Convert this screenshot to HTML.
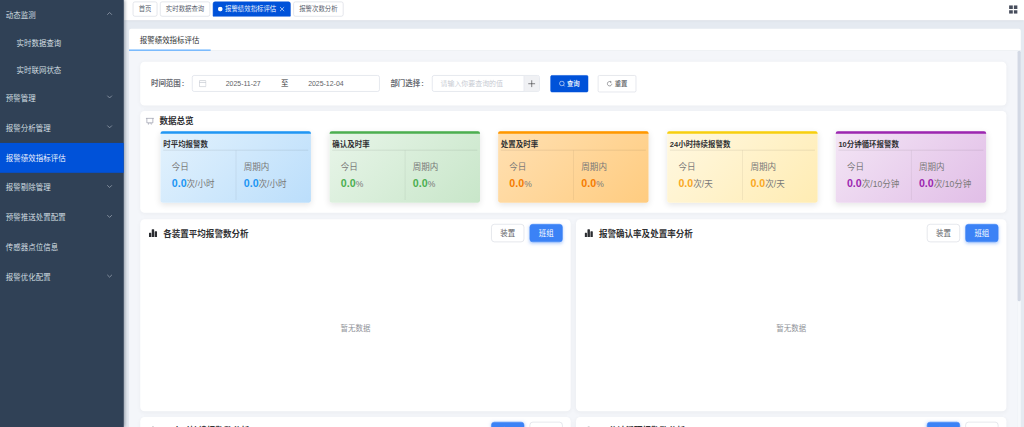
<!DOCTYPE html>
<html lang="zh-CN">
<head>
<meta charset="utf-8">
<title>报警绩效指标评估</title>
<style>
*{box-sizing:border-box;margin:0;padding:0}
html,body{width:1024px;height:427px;overflow:hidden;background:#e5eaf1}
body{font-family:"Liberation Sans","Noto Sans CJK SC",sans-serif;color:#303133}
#stage{position:absolute;left:0;top:0;width:1920px;height:801px;transform:scale(.533333);transform-origin:0 0;overflow:hidden;background:#e5eaf1;font-size:14px}
.abs{position:absolute}
/* sidebar */
#side{position:absolute;left:0;top:0;width:232px;height:801px;background:#304156;z-index:5;box-shadow:2px 0 6px rgba(0,21,41,.35)}
.mi{position:absolute;left:0;width:232px;height:56px;line-height:56px;padding-left:11px;font-size:14px;color:#dde3ea;white-space:nowrap;font-weight:350}
.mi.sub{height:50px;line-height:52px;padding-left:31px}
.mi.on{background:#0052d9;color:#fff}
.mi svg{position:absolute;right:20px;top:19px;width:13px;height:13px}
/* tags */
#tags{position:absolute;left:232px;top:0;width:1688px;height:38px;background:#fff;box-shadow:0 1px 3px 0 rgba(0,21,41,.07),0 2px 8px 0 rgba(0,21,41,.04);z-index:3}
.tag{position:absolute;top:3px;height:28px;line-height:26px;border:1px solid #cdd2dc;border-radius:4px;background:#fff;color:#495060;font-size:12px;padding:0 10px;white-space:nowrap;font-weight:350}
.tag.on{background:#0052d9;border-color:#0052d9;color:#fff;border-radius:4px 4px 1px 1px}
.tag.on .dot{display:inline-block;width:8px;height:8px;border-radius:50%;background:#fff;margin-right:5px;position:relative;top:0}
.tag.on .x{display:inline-block;width:16px;text-align:center;margin-left:1px;font-size:15px;line-height:20px;vertical-align:top;margin-top:2px;font-weight:400}
/* main */
#wrap{position:absolute;left:242px;top:54px;width:1672px;height:760px}
#thead{position:absolute;left:0;top:0;width:1672px;height:41px;background:#fff;border-radius:4px 4px 0 0;border-bottom:1px solid #dfe3ea}
#thead .t{position:absolute;left:0;top:0;height:40px;line-height:42px;padding:0 20px;font-size:14px;color:#303133;font-weight:400}
#thead .bar{position:absolute;left:0;top:39px;width:153px;height:2.5px;background:#409eff}
#tbody{position:absolute;left:0;top:41px;width:1666px;height:720px;background:#f4f6fa}
#sb{position:absolute;left:1666px;top:41px;width:6px;height:720px;background:#f6f8fb}
#sb i{position:absolute;left:0;top:0;width:6px;height:470px;background:#d2d8e4;border-radius:3px}
.card{position:absolute;background:#fff;border-radius:8px;box-shadow:0 2px 8px rgba(0,0,0,.04)}
/* form */
.lbl{position:absolute;font-size:14px;font-weight:700;color:#686b72;line-height:32px;white-space:nowrap}
.inp{position:absolute;height:31px;border:1px solid #d0d5e0;border-radius:4px;background:#fff;font-size:13px;color:#606266;line-height:29px}
.btn{position:absolute;height:32px;border-radius:3px;font-size:12px;line-height:30px;text-align:center;white-space:nowrap;font-weight:500}
/* stat cards */
.st{position:absolute;top:38px;width:282px;height:134px;padding-top:5px;border-radius:4px;box-shadow:0 4px 12px rgba(0,0,0,.1)}
.st .tb{position:absolute;left:0;top:0;width:100%;height:5.4px;border-radius:4px 4px 0 0}
.st h4{position:absolute;left:5px;right:5px;top:5px;height:31px;line-height:39.5px;font-size:14px;font-weight:700;color:#303133;border-bottom:1px solid rgba(0,0,0,.1)}
.st .vl{position:absolute;left:141px;top:36px;width:1px;height:93px;background:rgba(0,0,0,.1)}
.st .k{position:absolute;top:56px;font-size:16px;color:#787878;font-weight:400;line-height:22px}
.st .v{position:absolute;top:82px;font-size:16px;color:#787878;font-weight:400;line-height:30px;white-space:nowrap}
.st .v b{font-size:20px;font-weight:700}
.c1{left:0}.c2{left:141px}
/* chart cards */
.ch h3{position:absolute;left:43px;top:14.500px;font-size:16px;font-weight:700;color:#303133;line-height:26px;white-space:nowrap}
.ch .ic{position:absolute;left:16px;top:18px;width:16px;height:16px}
.ch .b{position:absolute;top:9px;width:62px;height:34px;line-height:32px;border-radius:6px;font-size:14px;text-align:center}
.ch .b.w{background:#fff;border:1px solid #d0d4dd;color:#606266}
.ch .b.p{background:#3b82f6;border:1px solid #3b82f6;color:#fff;box-shadow:0 2px 6px rgba(59,130,246,.35)}
.ch .nd{position:absolute;left:0;right:0;top:194px;text-align:center;font-size:14px;color:#909399;line-height:20px}
</style>
</head>
<body>
<div id="stage">

<div id="side">
  <div class="mi" style="top:0">动态监测<svg viewBox="0 0 12 12"><path d="M2 8 L6 4 L10 8" fill="none" stroke="#8e99a8" stroke-width="1.5"/></svg></div>
  <div class="mi sub" style="top:56px">实时数据查询</div>
  <div class="mi sub" style="top:106px">实时联网状态</div>
  <div class="mi" style="top:156px">预警管理<svg viewBox="0 0 12 12"><path d="M2 4 L6 8 L10 4" fill="none" stroke="#8e99a8" stroke-width="1.5"/></svg></div>
  <div class="mi" style="top:212px">报警分析管理<svg viewBox="0 0 12 12"><path d="M2 4 L6 8 L10 4" fill="none" stroke="#8e99a8" stroke-width="1.5"/></svg></div>
  <div class="mi on" style="top:268px">报警绩效指标评估</div>
  <div class="mi" style="top:324px">报警剔除管理<svg viewBox="0 0 12 12"><path d="M2 4 L6 8 L10 4" fill="none" stroke="#8e99a8" stroke-width="1.5"/></svg></div>
  <div class="mi" style="top:380px">预警推送处置配置<svg viewBox="0 0 12 12"><path d="M2 4 L6 8 L10 4" fill="none" stroke="#8e99a8" stroke-width="1.5"/></svg></div>
  <div class="mi" style="top:436px">传感器点位信息</div>
  <div class="mi" style="top:492px">报警优化配置<svg viewBox="0 0 12 12"><path d="M2 4 L6 8 L10 4" fill="none" stroke="#8e99a8" stroke-width="1.5"/></svg></div>
</div>

<div id="tags">
  <div class="tag" style="left:17px">首页</div>
  <div class="tag" style="left:68px">实时数据查询</div>
  <div class="tag on" style="left:167px;width:145.500px;padding:0 0 0 8px"><svg style="width:10px;height:10px;vertical-align:-1px;margin-right:4px" viewBox="0 0 10 10"><circle cx="5" cy="5" r="4.400" fill="#fff"/></svg>报警绩效指标评估<svg style="width:10px;height:10px;vertical-align:-1px;margin-left:6px" viewBox="0 0 10 10"><path d="M1 1l8 8M9 1l-8 8" stroke="#fff" stroke-width="1.200" fill="none"/></svg></div>
  <div class="tag" style="left:318px">报警次数分析</div>
  <svg class="abs" style="left:1660px;top:10.300px;width:16px;height:16px" viewBox="0 0 16 16"><path d="M0 0h7v7H0zM9 0h7v7H9zM0 9h7v7H0zM9 9h7v7H9z" fill="#474d5c"/></svg>
</div>

<div id="wrap">
  <div id="thead"><div class="t">报警绩效指标评估</div><div class="bar"></div></div>
  <div id="tbody">

    <!-- filter card -->
    <div class="card" style="left:21px;top:21px;width:1624px;height:82px">
      <div class="lbl" style="left:20px;top:25px">时间范围<span style="margin-left:2px">:</span></div>
      <div class="inp" style="left:97px;top:25px;width:351.500px">
        <svg class="abs" style="left:12px;top:8px;width:14px;height:14px" viewBox="0 0 14 14"><rect x="0.800" y="1" width="12.400" height="11.500" rx="1" fill="none" stroke="#c0c4cc" stroke-width="1.200"/><path d="M0.800 4.600h12.400" stroke="#c0c4cc" stroke-width="1.200" fill="none"/></svg>
        <span class="abs" style="left:31px;top:0;width:128px;text-align:center">2025-11-27</span>
        <span class="abs" style="left:160px;top:0;width:26px;text-align:center;color:#303133;font-size:14px">至</span>
        <span class="abs" style="left:186px;top:0;width:128px;text-align:center">2025-12-04</span>
      </div>
      <div class="lbl" style="left:469px;top:25px">部门选择<span style="margin-left:2px">:</span></div>
      <div class="inp" style="left:547px;top:25px;width:202px;overflow:hidden">
        <span class="abs" style="left:15px;top:0;color:#c4c8d0;font-weight:350">请输入你要查询的值</span>
        <span class="abs" style="right:0;top:-1px;width:29px;height:32px;background:#f0f1f4;border-left:1px solid #e2e5ea"></span>
        <svg class="abs" style="right:7px;top:7.500px;width:14px;height:14px" viewBox="0 0 14 14"><path d="M7 0.500v13M0.500 7h13" stroke="#303133" stroke-width="1.100" fill="none"/></svg>
      </div>
      <div class="btn" style="left:769px;top:25px;width:71px;background:#0052d9;border:1px solid #0052d9;color:#fff">
        <svg style="width:12px;height:12px;vertical-align:-2px;margin-right:3px" viewBox="0 0 12 12"><circle cx="5.500" cy="5.500" r="4.300" fill="none" stroke="#fff" stroke-width="1.100"/><path d="M8.600 8.600L11 11" stroke="#fff" stroke-width="1.100"/></svg>查询</div>
      <div class="btn" style="left:858px;top:25px;width:72px;height:31.500px;background:#fff;border:1px solid #d0d4dd;color:#606266">
        <svg style="width:12px;height:12px;vertical-align:-2px;margin-right:3px" viewBox="0 0 12 12"><path d="M10.200 6A4.200 4.200 0 1 1 8.600 2.700" fill="none" stroke="#606266" stroke-width="1.100"/><path d="M7 0.800L9.300 2.800L7 4.200" fill="none" stroke="#606266" stroke-width="1"/></svg>重置</div>
    </div>

    <!-- overview -->
    <div class="card" style="left:21px;top:113px;width:1624px;height:191px">
      <svg class="abs" style="left:9.500px;top:12px;width:16px;height:15px" viewBox="0 0 17 16"><path d="M0.500 2h16M2.500 2v9h12V2M6.500 11l-1 3.500M10.500 11l1 3.500" fill="none" stroke="#9092a3" stroke-width="1.300"/></svg>
      <div class="abs" style="left:36px;top:6px;font-size:16px;font-weight:700;color:#303133;line-height:26px">数据总览</div>

      <div class="st" style="left:38px;background:linear-gradient(135deg,#e3f2fd,#bbdefb)"><i class="tb" style="background:#2196f3"></i>
        <h4>时平均报警数</h4><i class="vl"></i>
        <div class="k" style="left:21px">今日</div><div class="v" style="left:21px;"><b style="color:#2196f3">0.0</b>次/小时</div>
        <div class="k" style="left:156px">周期内</div><div class="v" style="left:156px"><b style="color:#2196f3">0.0</b>次/小时</div>
      </div>
      <div class="st" style="left:355px;background:linear-gradient(135deg,#e8f5e9,#c8e6c9)"><i class="tb" style="background:#4caf50"></i>
        <h4>确认及时率</h4><i class="vl"></i>
        <div class="k" style="left:21px">今日</div><div class="v" style="left:21px;"><b style="color:#4caf50">0.0</b>%</div>
        <div class="k" style="left:156px">周期内</div><div class="v" style="left:156px"><b style="color:#4caf50">0.0</b>%</div>
      </div>
      <div class="st" style="left:671px;background:linear-gradient(135deg,#ffe0b2,#ffcc80)"><i class="tb" style="background:#ff9800"></i>
        <h4>处置及时率</h4><i class="vl"></i>
        <div class="k" style="left:21px">今日</div><div class="v" style="left:21px;"><b style="color:#f57c00">0.0</b>%</div>
        <div class="k" style="left:156px">周期内</div><div class="v" style="left:156px"><b style="color:#f57c00">0.0</b>%</div>
      </div>
      <div class="st" style="left:988px;background:linear-gradient(135deg,#fff8e1,#ffecb3)"><i class="tb" style="background:#f7cf0f"></i>
        <h4>24小时持续报警数</h4><i class="vl"></i>
        <div class="k" style="left:21px">今日</div><div class="v" style="left:21px;"><b style="color:#f9a825">0.0</b>次/天</div>
        <div class="k" style="left:156px">周期内</div><div class="v" style="left:156px"><b style="color:#f9a825">0.0</b>次/天</div>
      </div>
      <div class="st" style="left:1304px;background:linear-gradient(135deg,#f3e5f5,#e1bee7)"><i class="tb" style="background:#9c27b0"></i>
        <h4>10分钟循环报警数</h4><i class="vl"></i>
        <div class="k" style="left:21px">今日</div><div class="v" style="left:21px;"><b style="color:#9c27b0">0.0</b>次/10分钟</div>
        <div class="k" style="left:156px">周期内</div><div class="v" style="left:156px"><b style="color:#9c27b0">0.0</b>次/10分钟</div>
      </div>
    </div>

    <!-- charts row 1 -->
    <div class="card ch" style="left:21px;top:316px;width:807px;height:360px">
      <svg class="ic" viewBox="0 0 16 16"><path d="M0.300 8.200a1 1 0 0 1 1-1h2.200a1 1 0 0 1 1 1v7H0.300zM5.500 2a1 1 0 0 1 1-1h2.600a1 1 0 0 1 1 1v13.200H5.500zM11.100 5.500a1 1 0 0 1 1-1h2.400a1 1 0 0 1 1 1v9.700h-4.400z" fill="#2b2d31"/></svg>
      <h3>各装置平均报警数分析</h3>
      <div class="b w" style="left:658px">装置</div><div class="b p" style="left:730px">班组</div>
      <div class="nd">暂无数据</div>
    </div>
    <div class="card ch" style="left:838px;top:316px;width:807px;height:360px">
      <svg class="ic" viewBox="0 0 16 16"><path d="M0.300 8.200a1 1 0 0 1 1-1h2.200a1 1 0 0 1 1 1v7H0.300zM5.500 2a1 1 0 0 1 1-1h2.600a1 1 0 0 1 1 1v13.200H5.500zM11.100 5.500a1 1 0 0 1 1-1h2.400a1 1 0 0 1 1 1v9.700h-4.400z" fill="#2b2d31"/></svg>
      <h3>报警确认率及处置率分析</h3>
      <div class="b w" style="left:658px">装置</div><div class="b p" style="left:730px">班组</div>
      <div class="nd">暂无数据</div>
    </div>

    <!-- charts row 2 (clipped) -->
    <div class="card ch" style="left:21px;top:687px;width:807px;height:360px">
      <svg class="ic" style="top:16.500px" viewBox="0 0 16 16"><path d="M0.300 8.200a1 1 0 0 1 1-1h2.200a1 1 0 0 1 1 1v7H0.300zM5.500 2a1 1 0 0 1 1-1h2.600a1 1 0 0 1 1 1v13.200H5.500zM11.100 5.500a1 1 0 0 1 1-1h2.400a1 1 0 0 1 1 1v9.700h-4.400z" fill="#2b2d31"/></svg>
      <h3 style="top:13px">24小时持续报警数分析</h3>
      <div class="b p" style="left:658px">今日</div><div class="b w" style="left:730px">周期内</div>
    </div>
    <div class="card ch" style="left:838px;top:687px;width:807px;height:360px">
      <svg class="ic" style="top:16.500px" viewBox="0 0 16 16"><path d="M0.300 8.200a1 1 0 0 1 1-1h2.200a1 1 0 0 1 1 1v7H0.300zM5.500 2a1 1 0 0 1 1-1h2.600a1 1 0 0 1 1 1v13.200H5.500zM11.100 5.500a1 1 0 0 1 1-1h2.400a1 1 0 0 1 1 1v9.700h-4.400z" fill="#2b2d31"/></svg>
      <h3 style="top:13px">10分钟循环报警数分析</h3>
      <div class="b p" style="left:658px">今日</div><div class="b w" style="left:730px">周期内</div>
    </div>

  </div>
  <div id="sb"><i></i></div>
</div>

</div>
</body>
</html>
